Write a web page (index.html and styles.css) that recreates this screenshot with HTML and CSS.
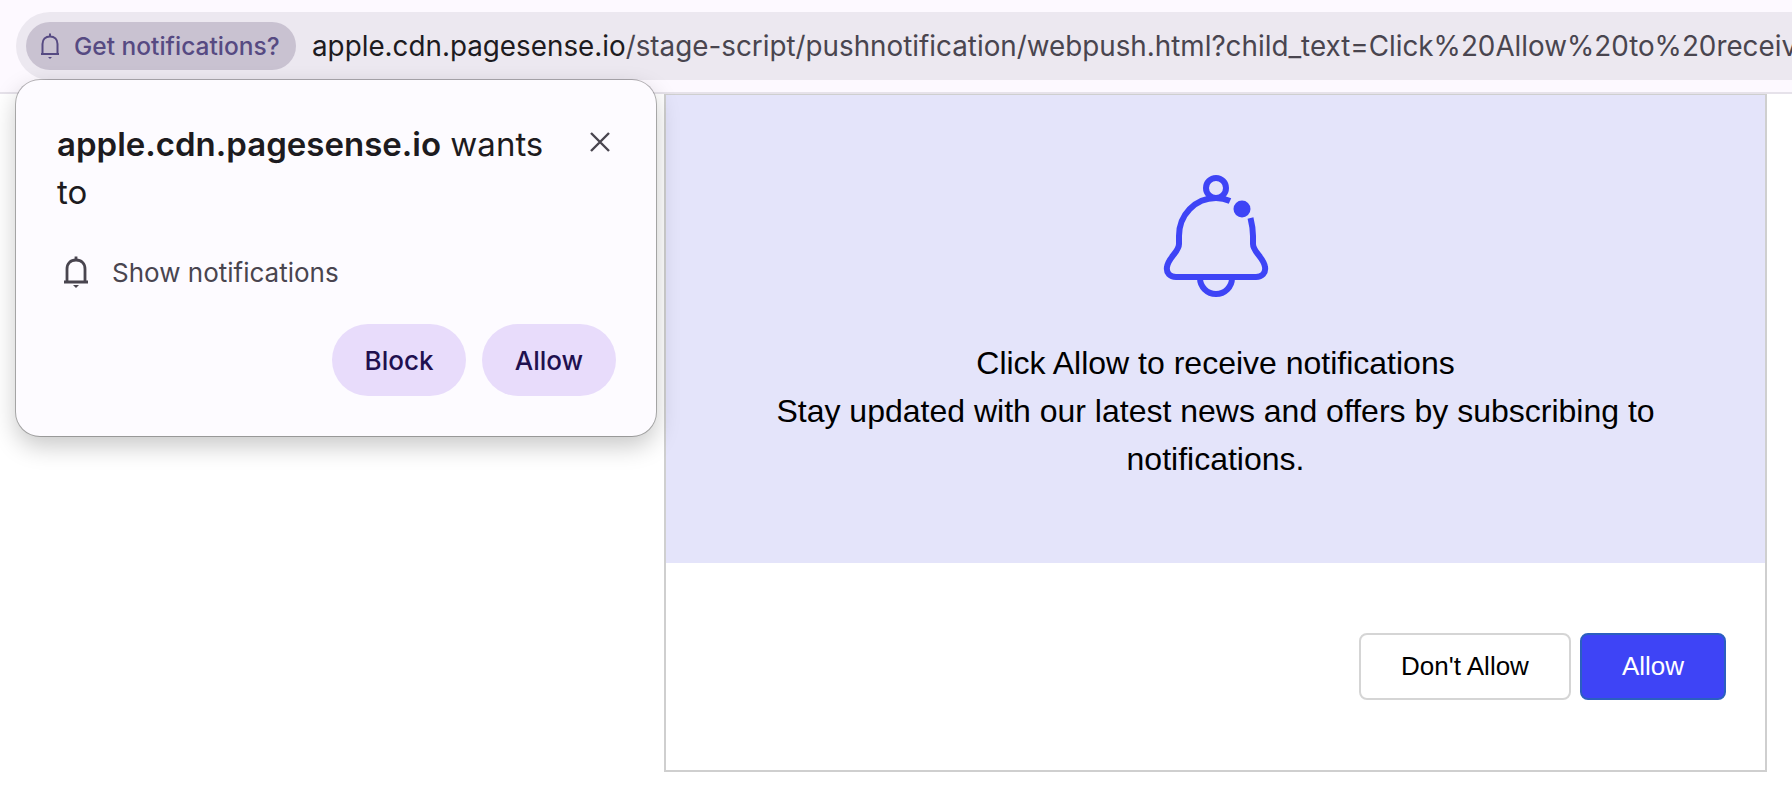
FILE: index.html
```html
<!DOCTYPE html>
<html lang="en">
<head>
  <meta charset="UTF-8">
  <title>webpush</title>
  <link rel="stylesheet" href="styles.css">
</head>
<body>
<header class="toolbar">
  <div class="omnibox">
    <div class="chip">
      <svg class="chip-bell" viewBox="0 0 20 26" width="20" height="26">
        <path d="M2.500 21V11C2.500 6.500 5.500 3.500 10 3.500S17.500 6.500 17.500 11V21M1 21H19" fill="none" stroke="currentColor" stroke-width="2"/>
        <path d="M10 0.500V3.500" stroke="currentColor" stroke-width="2"/>
        <path d="M8 24H12L10 26Z" fill="currentColor"/>
      </svg>
      <span>Get notifications?</span>
    </div>
    <div class="url">apple.cdn.pagesense.io<span class="url-path">/stage-script/pushnotification/webpush.html?child_text=Click%20Allow%20to%20receive%20notifications</span></div>
  </div>
</header>

<div class="popup">
  <div class="popup-head">
    <div class="popup-title"><b>apple.cdn.pagesense.io</b> wants to</div>
    <svg class="popup-close" viewBox="0 0 20 20" width="20" height="20">
      <path d="M1 1L19 19M19 1L1 19" stroke="currentColor" stroke-width="2.400" fill="none"/>
    </svg>
  </div>
  <div class="popup-row">
    <svg class="popup-bell" viewBox="0 0 24 32" width="24" height="32">
      <path d="M3 26V13C3 7.500 6.500 4 12 4S21 7.500 21 13V26M0 26H24" fill="none" stroke="currentColor" stroke-width="2.800"/>
      <path d="M12 0.500V4" stroke="currentColor" stroke-width="2.800"/>
      <path d="M9 29H15L12 32Z" fill="currentColor"/>
    </svg>
    <span>Show notifications</span>
  </div>
  <div class="popup-actions">
    <button class="pill">Block</button>
    <button class="pill">Allow</button>
  </div>
</div>

<main class="page">
  <section class="frame">
    <div class="band">
      <svg class="band-bell" viewBox="30 14 112 124" width="112" height="124">
        <circle cx="86" cy="28" r="10" fill="none" stroke="#3e44f6" stroke-width="6"/>
        <path d="M100 41C95.500 39 91 38 86 38C65 38 49 55 49 76V84C49 92 38 98 37 107C36 113 40 117 46 117H126C132 117 136 113 135 107C134 98 123 92 123 84V76C123 69 122 64 120.500 58" fill="none" stroke="#3e44f6" stroke-width="6"/>
        <path d="M70 118A16 16 0 0 0 102 118" fill="none" stroke="#3e44f6" stroke-width="6"/>
        <circle cx="112" cy="49" r="8.500" fill="#3e44f6"/>
      </svg>
      <p class="band-text">Click Allow to receive notifications<br>Stay updated with our latest news and offers by subscribing to notifications.</p>
    </div>
    <div class="frame-actions">
      <button class="btn">Don't Allow</button>
      <button class="btn btn-primary">Allow</button>
    </div>
  </section>
</main>
</body>
</html>
```

FILE: styles.css
```css
:root {
  --blue: #3e44f6;
  --ui-font: Inter, "Noto Sans", sans-serif;
}
html, body {
  height: 100%;
}
body {
  margin: 0;
  background: #fff;
  overflow: hidden;
  font-family: "Liberation Sans", Arial, sans-serif;
  color: #000;
}
.toolbar {
  height: 94px;
  box-sizing: border-box;
  padding: 12px 0 0 16px;
  background: #fdf9ff;
  border-bottom: 2px solid #e6e2ea;
  font-family: var(--ui-font);
  overflow: hidden;
}
.omnibox {
  display: flex;
  align-items: center;
  height: 68px;
  padding-left: 10px;
  background: #ece8f0;
  border-radius: 34px 0 0 34px;
  white-space: nowrap;
}
.chip {
  flex: none;
  display: flex;
  align-items: center;
  gap: 14px;
  height: 48px;
  width: 270px;
  box-sizing: border-box;
  padding-left: 14px;
  background: #c9c2d1;
  border-radius: 24px;
  color: #564a82;
  font-size: 24.500px;
  font-weight: 500;
}
.url {
  margin-left: 16px;
  color: #1d1b20;
  font-size: 27.800px;
}
.url-path {
  color: #49454f;
}

/* permission bubble, sits over the toolbar and the page */
.popup {
  position: absolute;
  left: 16px;
  top: 80px;
  width: 640px;
  height: 356px;
  box-sizing: border-box;
  padding: 40px 40px 0 41px;
  background: #fdfbff;
  border-radius: 24px;
  box-shadow: 0 0 0 1px rgba(0,0,0,0.28), 0 10px 24px rgba(0,0,0,0.22);
  font-family: var(--ui-font);
}
.popup-head {
  display: flex;
  justify-content: space-between;
  align-items: flex-start;
}
.popup-title {
  width: 500px;
  color: #1d1b20;
  font-size: 33px;
  line-height: 48px;
}
.popup-title b {
  font-weight: 600;
}
.popup-close {
  margin: 12px 6px 0 0;
  color: #49454f;
}
.popup-row {
  display: flex;
  align-items: center;
  gap: 24px;
  margin: 40px 0 0 7px;
  color: #49454f;
  font-size: 26px;
}
.popup-bell {
  color: #49454f;
}
.popup-actions {
  display: flex;
  justify-content: flex-end;
  gap: 16px;
  margin-top: 36px;
}
.pill {
  width: 134px;
  height: 72px;
  border: none;
  border-radius: 36px;
  background: #e8dcfb;
  color: #21104f;
  font-family: inherit;
  font-size: 26px;
  font-weight: 500;
}

.page {
  padding: 0 0 0 664px;
}
.frame {
  width: 1103px;
  height: 678px;
  box-sizing: border-box;
  border: 2px solid #cfcfcf;
  border-top-width: 1px;
}
.band {
  display: flex;
  flex-direction: column;
  align-items: center;
  height: 468px;
  box-sizing: border-box;
  padding: 79px 90px 0;
  background: #e4e4fa;
}
.band-bell {
  flex: none;
}
.band-text {
  margin: 41px 0 0;
  text-align: center;
  font-size: 32px;
  line-height: 48px;
}
.frame-actions {
  display: flex;
  justify-content: flex-end;
  gap: 9px;
  padding: 70px 39px 0 0;
}
.btn {
  width: 212px;
  height: 67px;
  border: 2px solid #d5d5d5;
  border-radius: 8px;
  background: #fff;
  color: #000;
  font-family: inherit;
  font-size: 26px;
}
.btn-primary {
  width: 146px;
  border-color: #2b5fc0;
  background: var(--blue);
  color: #fff;
}
```
